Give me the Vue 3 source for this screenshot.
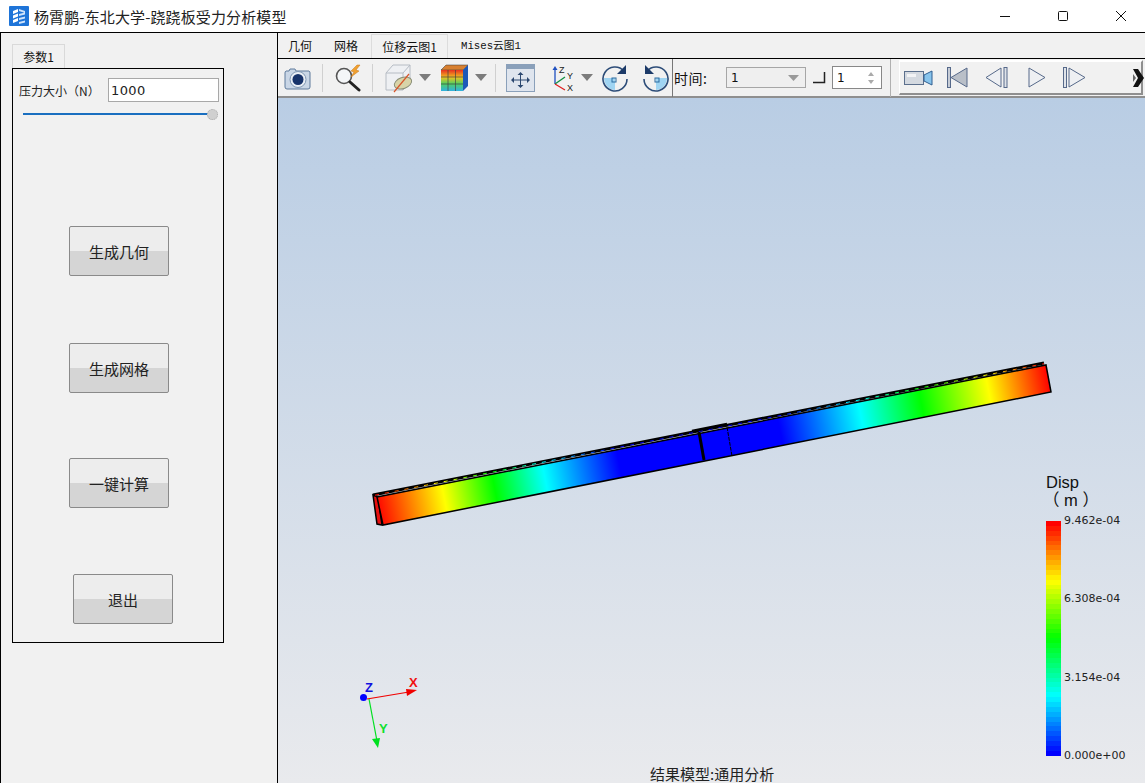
<template>
  <div class="app">
    <header class="titlebar">
      <svg class="logo" width="20" height="20" viewBox="0 0 20 20">
        <rect width="20" height="20" rx="1" fill="#1e74d8" />
        <path d="M4 5l5-2v3l-5 2zM4 9.5l5-2v3l-5 2zM4 14l5-2v3l-5 2z" fill="#fff" />
        <path d="M10 3l6 2v2l-6-2zM10 8l6-1.5v2L10 10zM10 12l6-1.5v2L10 14zM10 16l6-1.5v2L10 18z" fill="#cfe3fa" />
      </svg>
      <span class="app-title">杨霄鹏-东北大学-跷跷板受力分析模型</span>
      <div class="win-controls">
        <svg width="12" height="12" viewBox="0 0 12 12"><path d="M1 6.5h10" stroke="#111" stroke-width="1" /></svg>
        <svg width="12" height="12" viewBox="0 0 12 12"><rect x="1.5" y="1.5" width="9" height="9" rx="1" fill="none" stroke="#111" /></svg>
        <svg width="12" height="12" viewBox="0 0 12 12"><path d="M1 1l10 10M11 1L1 11" stroke="#111" stroke-width="1" /></svg>
      </div>
    </header>

    <main class="workspace">
      <section class="side">
        <div class="side-tab">参数1</div>
        <div class="side-panel">
          <div class="form-row">
            <label>压力大小（N）</label>
            <input class="num-input" value="1000" />
          </div>
          <div class="slider">
            <div class="slider-track"></div>
            <div class="slider-handle"></div>
          </div>
          <button v-for="b in buttons" :key="b.text" class="action" :class="b.cls">{{ b.text }}</button>
        </div>
      </section>

      <section class="viewer">
        <nav class="tabs">
          <span v-for="t in tabs" :key="t.text" class="tab" :class="[t.cls, { active: t.active }]">{{ t.text }}</span>
        </nav>
        <div class="pane">
          <div class="toolbar">
            <!-- camera -->
            <svg class="i-cam" width="28" height="26" viewBox="0 0 28 26">
              <path d="M2 6h3l1-2h5l1 2h13a2 2 0 0 1 1 2v14a2 2 0 0 1-2 2H3a2 2 0 0 1-2-2V8a2 2 0 0 1 1-2z" fill="#c9d6e6" stroke="#5f7b9c" />
              <circle cx="14" cy="14.5" r="8" fill="#e9eef5" stroke="#7f97b3" />
              <circle cx="14" cy="14.5" r="5.5" fill="#17336a" />
            </svg>
            <i class="sep sep-a"></i>
            <!-- zoom -->
            <svg class="i-zoom" width="30" height="28" viewBox="0 0 30 28">
              <circle cx="11" cy="12" r="7.5" fill="#f4f6f8" stroke="#555" stroke-width="1.6" />
              <path d="M17 18l9 8" stroke="#222" stroke-width="3" stroke-linecap="round" />
              <path d="M24 1l-6 6 3 1-3 5 8-6-3-1 4-5z" fill="#f0a030" stroke="#c87818" stroke-width=".5" />
            </svg>
            <i class="sep sep-b"></i>
            <!-- clip cube -->
            <svg class="i-cube" width="30" height="30" viewBox="0 0 30 30">
              <path d="M2 10l7-8h17v17l-7 8H2z" fill="#eef0f3" stroke="#b6bcc4" />
              <path d="M2 10h17v17M19 10l7-8" fill="none" stroke="#b6bcc4" />
              <ellipse cx="19" cy="20" rx="9" ry="5.5" transform="rotate(-20 19 20)" fill="#d8d4a8" stroke="#8a8f78" />
              <path d="M10 29l15-18" stroke="#d8552a" stroke-width="1.2" />
            </svg>
            <svg class="i-drop" width="12" height="7" viewBox="0 0 12 7"><path d="M0 0h12L6 7z" fill="#7c7c7c" /></svg>
            <!-- contour cube -->
            <svg class="i-rubik" width="30" height="28" viewBox="0 0 30 28">
              <defs>
                <linearGradient id="rub" x1="0" y1="0" x2="0" y2="1">
                  <stop offset="0" stop-color="#e83020" />
                  <stop offset=".35" stop-color="#f0c020" />
                  <stop offset=".65" stop-color="#50d060" />
                  <stop offset="1" stop-color="#30b0e0" />
                </linearGradient>
              </defs>
              <path d="M1 6l5-5h22l-5 5z" fill="#d88030" stroke="#333" stroke-width=".5" />
              <path d="M23 6l5-5v21l-5 5z" fill="#1c58b8" />
              <rect x="1" y="6" width="22" height="21" fill="url(#rub)" />
              <path d="M8 6v21M15.500 6v21M1 13h22M1 20h22" stroke="#444" stroke-width=".7" />
            </svg>
            <svg class="i-drop" width="12" height="7" viewBox="0 0 12 7"><path d="M0 0h12L6 7z" fill="#7c7c7c" /></svg>
            <i class="sep sep-b"></i>
            <!-- fit view -->
            <svg class="i-fit" width="29" height="28" viewBox="0 0 29 28">
              <rect x=".5" y=".5" width="28" height="27" fill="#dfe5ee" stroke="#8aa0ba" />
              <rect x="1" y="1" width="27" height="4" fill="#8aa0ba" />
              <path d="M14.500 8l-3 3h6zM14.500 24l-3-3h6zM5 16l3-3v6zM24 16l-3-3v6z" fill="#2c4870" />
              <path d="M14.500 11v10M8 16h13" stroke="#2c4870" />
            </svg>
            <!-- axes -->
            <svg class="i-axes" width="27" height="28" viewBox="0 0 27 28">
              <path d="M6 20V5" stroke="#2050c0" stroke-width="1.300" />
              <path d="M6 2l-2.500 4h5z" fill="#2050c0" />
              <path d="M6 20l10-7" stroke="#109040" stroke-width="1.300" />
              <path d="M6 20l10 6" stroke="#e02020" stroke-width="1.300" />
              <text x="10" y="9" class="axis-txt">Z</text>
              <text x="18" y="15" class="axis-txt">Y</text>
              <text x="18" y="27" class="axis-txt">X</text>
            </svg>
            <svg class="i-drop" width="12" height="7" viewBox="0 0 12 7"><path d="M0 0h12L6 7z" fill="#7c7c7c" /></svg>
            <!-- rotate -->
            <svg class="i-rot" width="27" height="28" viewBox="0 0 27 28">
              <path d="M2 14h11v12a12 12 0 0 1-11-12z" fill="#9fd4f2" />
              <rect x="10" y="14" width="4" height="4" fill="none" stroke="#2a6aa0" />
              <path d="M22 7A12 12 0 1 0 25 15" fill="none" stroke="#2c4c78" stroke-width="1.600" />
              <path d="M24 1v9h-9z" fill="#1c3a68" />
            </svg>
            <svg class="i-rot2" width="27" height="28" viewBox="0 0 27 28">
              <path d="M25 14H14v12a12 12 0 0 0 11-12z" fill="#9fd4f2" />
              <rect x="13" y="14" width="4" height="4" fill="none" stroke="#2a6aa0" />
              <path d="M5 7a12 12 0 1 1-3 8" fill="none" stroke="#2c4c78" stroke-width="1.600" />
              <path d="M3 1v9h9z" fill="#1c3a68" />
            </svg>
            <i class="sep sep-c"></i>
            <span class="time-label">时间:</span>
            <div class="combo">
              <span>1</span>
              <svg width="11" height="6" viewBox="0 0 11 6"><path d="M0 0h11L5.500 6z" fill="#999" /></svg>
            </div>
            <svg class="i-corner" width="13" height="12" viewBox="0 0 13 12"><path d="M0 10.500h11.500V0" fill="none" stroke="#222" stroke-width="1.500" /></svg>
            <div class="spin">
              <span>1</span>
              <svg width="8" height="14" viewBox="0 0 8 14"><path d="M4 1l3 4H1zM4 13L1 9h6z" fill="#aaa" /></svg>
            </div>
            <i class="sep sep-d"></i>
            <div class="media">
              <svg class="m-cam" width="29" height="17" viewBox="0 0 29 17">
                <rect x=".5" y="2.500" width="19" height="13" fill="#d4d9e0" stroke="#5b6f8c" />
                <rect x="3" y="5" width="9" height="3" fill="#f2f3f5" />
                <path d="M20 6l8-4v14l-8-4z" fill="#88c4ec" stroke="#2f5f92" />
              </svg>
              <svg class="m-first" width="21" height="21" viewBox="0 0 21 21">
                <rect x=".5" y=".5" width="3" height="20" fill="#c6ccd6" stroke="#56698a" />
                <path d="M4 10.500L20 1v19z" fill="#b9bfc8" stroke="#56698a" />
              </svg>
              <svg class="m-prev" width="23" height="21" viewBox="0 0 23 21">
                <path d="M1 10.500L16 1v19z" fill="#eef0f3" stroke="#56698a" />
                <rect x="19" y=".5" width="3" height="20" fill="#dfe3e9" stroke="#56698a" />
              </svg>
              <svg class="m-play" width="18" height="21" viewBox="0 0 18 21">
                <path d="M1 1l16 9.500L1 20z" fill="#eef0f3" stroke="#56698a" />
              </svg>
              <svg class="m-next" width="23" height="21" viewBox="0 0 23 21">
                <rect x=".5" y=".5" width="3" height="20" fill="#dfe3e9" stroke="#56698a" />
                <path d="M6 1l16 9.500L6 20z" fill="#eef0f3" stroke="#56698a" />
              </svg>
              <svg class="m-more" width="11" height="18" viewBox="0 0 11 18">
                <path d="M0 0h5l6 9-6 9H0l5-9z" fill="#111" />
                <path d="M0 5l3 4-3 4z" fill="#666" />
              </svg>
            </div>
          </div>

          <div class="scene">
            <svg class="model" width="867" height="685" viewBox="278 98 867 685">
              <defs>
                <linearGradient id="disp" gradientUnits="userSpaceOnUse" x1="377" y1="511" x2="1049" y2="378">
                  <stop offset="0" stop-color="#ff0000" />
                  <stop offset=".1" stop-color="#ffff00" />
                  <stop offset=".175" stop-color="#00ff00" />
                  <stop offset=".25" stop-color="#00ffff" />
                  <stop offset=".36" stop-color="#0000ff" />
                  <stop offset=".6" stop-color="#0000ff" />
                  <stop offset=".72" stop-color="#00ffff" />
                  <stop offset=".81" stop-color="#00ff00" />
                  <stop offset=".91" stop-color="#ffff00" />
                  <stop offset="1" stop-color="#ff0000" />
                </linearGradient>
              </defs>
              <!-- beam -->
              <path d="M373 495l4 29 5 1-4-28z" fill="#e81010" stroke="#000" stroke-width="1.500" />
              <path d="M377 497L1046 365l5 27L383 525z" fill="url(#disp)" stroke="#000" stroke-width="1.500" />
              <path d="M373 495L1044 363" stroke="#000" stroke-width="3" />
              <path d="M375 495.200L1044 363.700" stroke="url(#disp)" stroke-width="1" stroke-dasharray="4 6" />
              <!-- center block -->
              <path d="M692 431l35-7" stroke="#000" stroke-width="2.500" />
              <path d="M699 432l5 28" stroke="#000" stroke-width="3" />
              <path d="M727 427l5 29" stroke="#000" stroke-width="1" stroke-dasharray="4 1" />
              <!-- triad -->
              <circle cx="363.500" cy="697.500" r="3.500" fill="#0000ff" />
              <path d="M367 699l42-7" stroke="#f00000" stroke-width="1.200" />
              <path d="M406 689l11 1-10 6z" fill="#f00000" />
              <path d="M369 699l8 42" stroke="#00e020" stroke-width="1.200" />
              <path d="M372 739l8-1-2 10z" fill="#00e020" />
              <text x="365" y="692" class="triad" fill="#1010e0">Z</text>
              <text x="409" y="687" class="triad" fill="#f01010">X</text>
              <text x="379" y="733" class="triad" fill="#10e030">Y</text>
            </svg>

            <div class="legend">
              <div class="legend-head">
                <div>Disp</div>
                <div class="unit">（ m ）</div>
              </div>
              <div class="legend-body">
                <div class="colorbar">
                  <div v-for="(c, i) in barColors" :key="i" class="bar-step" :style="{ background: c }"></div>
                </div>
                <div class="ticks">
                  <span v-for="t in ticks" :key="t">{{ t }}</span>
                </div>
              </div>
            </div>

            <div class="caption">结果模型:通用分析</div>
          </div>
        </div>
      </section>
    </main>
  </div>
</template>

<script setup>
const buttons = [
  { text: '生成几何', cls: 'b1' },
  { text: '生成网格', cls: 'b2' },
  { text: '一键计算', cls: 'b3' },
  { text: '退出', cls: 'b4' }
]

const tabs = [
  { text: '几何', cls: 't1' },
  { text: '网格', cls: 't2' },
  { text: '位移云图1', cls: 't3', active: true },
  { text: 'Mises云图1', cls: 't4' }
]

const ticks = ['9.462e-04', '6.308e-04', '3.154e-04', '0.000e+00']

// hue runs red -> blue from the top of the bar
const barColors = Array.from({ length: 48 }, (_, i) => `hsl(${(i / 47) * 240}, 100%, 50%)`)
</script>

<style>
html, body {
  margin: 0;
  padding: 0;
  overflow: hidden;
}
</style>

<style scoped>
* {
  box-sizing: border-box;
}
.app {
  width: 1145px;
  height: 783px;
  overflow: hidden;
  background: #f1f1f1;
  font-family: "Noto Sans CJK SC", "Liberation Sans", sans-serif;
  color: #111;
}

/* title bar */
.titlebar {
  height: 32px;
  background: #fff;
  display: flex;
  align-items: center;
  padding-left: 9px;
}
.logo {
  margin-right: 5px;
}
.app-title {
  font-size: 15px;
  letter-spacing: .12px;
  color: #222;
}
.win-controls {
  margin-left: auto;
  display: flex;
  align-items: center;
  gap: 46px;
  padding-right: 18px;
}

.workspace {
  height: 751px;
  display: flex;
  border-top: 1px solid #000;
  border-left: 1px solid #000;
}

/* left column */
.side {
  width: 277px;
  flex: none;
  padding: 11px 0 0 11px;
  border-right: 1px solid #000;
}
.side-tab {
  width: 53px;
  height: 25px;
  margin-bottom: -1px;
  border: 1px solid #d9d9d9;
  border-bottom: none;
  font-size: 12px;
  line-height: 24px;
  text-align: center;
}
.side-panel {
  width: 212px;
  height: 575px;
  border: 1px solid #000;
  padding: 9px 4px 0 6px;
  display: flex;
  flex-direction: column;
}
.form-row {
  display: flex;
  align-items: center;
  height: 24px;
}
.form-row label {
  font-size: 12px;
  width: 89px;
  white-space: nowrap;
  color: #222;
}
.num-input {
  width: 111px;
  height: 24px;
  border: 1px solid #a8a8a8;
  outline: none;
  background: #fff;
  padding: 0 2px;
  font-family: "DejaVu Sans", sans-serif;
  font-size: 13px;
  letter-spacing: .4px;
  color: #222;
}
.slider {
  position: relative;
  height: 10px;
  margin: 7px 0 0 4px;
  width: 195px;
}
.slider-track {
  position: absolute;
  left: 0;
  right: 5px;
  top: 4px;
  height: 2px;
  background: #1a6fc0;
}
.slider-handle {
  position: absolute;
  right: 0;
  top: 0;
  width: 11px;
  height: 11px;
  border-radius: 50%;
  background: #d0d0d0;
  border: 1px dotted #aaa;
}
.action {
  width: 100px;
  height: 50px;
  flex: none;
  border: 1px solid #8a8a8a;
  border-radius: 2px;
  background: linear-gradient(#ededed 0 50%, #d5d5d5 50% 100%);
  font-family: inherit;
  font-size: 15px;
  color: #222;
  padding: 0;
}
.b1 { margin: 107px 0 0 50px; }
.b2 { margin: 67px 0 0 50px; }
.b3 { margin: 65px 0 0 50px; }
.b4 { margin: 66px 0 0 54px; }

/* right column */
.viewer {
  flex: 1;
  min-width: 0;
  display: flex;
  flex-direction: column;
}
.tabs {
  height: 25px;
  display: flex;
  align-items: flex-end;
  padding-left: 10px;
}
.tab {
  font-size: 12px;
  height: 24px;
  line-height: 24px;
  white-space: nowrap;
}
.t1 { width: 23px; }
.t2 { width: 24px; margin-left: 23px; }
.t3 {
  width: 77px;
  margin-left: 13px;
  text-align: center;
  border: 1px solid #dcdcdc;
  border-bottom: none;
  line-height: 23px;
}
.t4 {
  margin-left: 13px;
  font-family: "Liberation Mono", "Noto Sans CJK SC", monospace;
  font-size: 10.700px;
}
.pane {
  flex: 1;
  min-height: 0;
  display: flex;
  flex-direction: column;
  border-top: 1px solid #000;
}
.toolbar {
  height: 39px;
  flex: none;
  display: flex;
  align-items: center;
  background: #f1f1f1;
  border-bottom: 2px solid #8f8f8f;
}
.sep {
  display: block;
  width: 1px;
  height: 28px;
  flex: none;
  background: #d0d0d0;
}
.toolbar svg {
  flex: none;
}
.i-cam { margin-left: 6px; }
.sep-a { margin-left: 10px; }
.i-zoom { margin-left: 10px; }
.sep-b { margin-left: 9px; }
.i-cube { margin-left: 11px; }
.i-drop { margin-left: 5px; margin-right: -1px; }
.i-rubik { margin-left: 10px; }
.i-fit { margin-left: 10px; }
.i-axes { margin-left: 14px; }
.i-rot { margin-left: 10px; }
.i-rot2 { margin-left: 13px; }
.sep-c {
  margin-left: 3px;
  width: 1px;
  height: 38px;
  background: #777;
}
.sep-d {
  margin-left: 8px;
  height: 38px;
  background: #b0b0b0;
}
.axis-txt {
  font-family: "Liberation Sans", sans-serif;
  font-size: 9px;
  fill: #222;
}
.time-label {
  margin-left: 1px;
  width: 38px;
  font-size: 14px;
  letter-spacing: .5px;
  white-space: nowrap;
  flex: none;
}
.combo {
  margin-left: 14px;
  width: 80px;
  height: 21px;
  flex: none;
  border: 1px solid #a6a6a6;
  display: flex;
  align-items: center;
  justify-content: space-between;
  padding: 0 6px 0 4px;
  font-size: 12px;
  background: #efefef;
  font-family: "DejaVu Sans", sans-serif;
}
.i-corner { margin-left: 7px; }
.spin {
  margin-left: 6px;
  width: 50px;
  height: 23px;
  flex: none;
  border: 1px solid #888;
  background: #fff;
  display: flex;
  align-items: center;
  justify-content: space-between;
  padding: 0 6px 0 4px;
  font-size: 12px;
  font-family: "DejaVu Sans", sans-serif;
}
.media {
  margin-left: 8px;
  width: 244px;
  height: 35px;
  flex: none;
  display: flex;
  align-items: center;
  border-top: 2px solid #fff;
  border-left: 1px solid #fff;
  border-right: 2px solid #8f8f8f;
  border-bottom: 2px solid #8f8f8f;
}
.m-cam { margin-left: 4px; }
.m-first { margin-left: 14px; }
.m-prev { margin-left: 17px; }
.m-play { margin-left: 20px; }
.m-next { margin-left: 17px; }
.m-more { margin-left: 47px; }

/* result scene */
.scene {
  position: relative;
  flex: 1;
  min-height: 0;
  overflow: hidden;
  background: linear-gradient(#b9cde4, #e9eaed);
}
.model {
  position: absolute;
  left: 0;
  top: 0;
}
.triad {
  font-family: "Liberation Sans", sans-serif;
  font-size: 13px;
  font-weight: 700;
}
.legend {
  position: absolute;
  left: 768px;
  top: 375px;
}
.legend-head {
  font-family: "Liberation Sans", "Noto Sans CJK SC", sans-serif;
  font-size: 16.500px;
  line-height: 18px;
  color: #111;
}
.unit {
  margin-left: -3px;
  white-space: nowrap;
}
.legend-body {
  display: flex;
  margin-top: 12px;
}
.colorbar {
  width: 15px;
  height: 235px;
  display: flex;
  flex-direction: column;
}
.bar-step {
  flex: 1;
}
.ticks {
  height: 248px;
  margin: -7px 0 0 3px;
  display: flex;
  flex-direction: column;
  justify-content: space-between;
  font-family: "DejaVu Sans", sans-serif;
  font-size: 11px;
  line-height: 13px;
  color: #222;
}
.caption {
  position: absolute;
  left: 372px;
  bottom: 0;
  font-size: 15px;
  line-height: 18px;
  color: #222;
  white-space: nowrap;
}
</style>
